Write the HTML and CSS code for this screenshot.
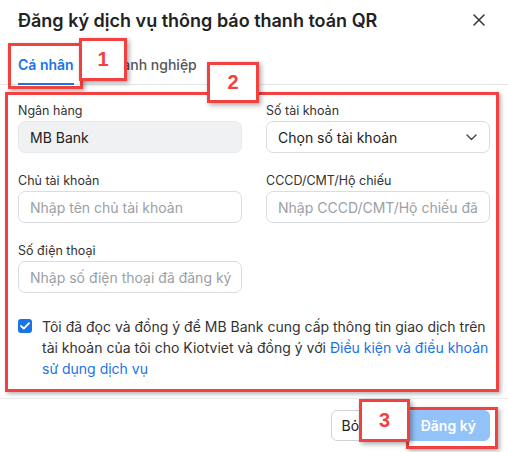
FILE: index.html
```html
<!DOCTYPE html>
<html lang="vi">
<head>
    <meta charset="UTF-8">
    <meta name="viewport" content="width=device-width, initial-scale=1.0">
    <title>Đăng ký dịch vụ thông báo thanh toán QR</title>
    <link rel="stylesheet" href="styles.css">
</head>
<body>
    <div class="dialog">
        <div class="header">
            <h2>Đăng ký dịch vụ thông báo thanh toán QR</h2>
            <span class="close">
                <svg width="12" height="12" viewBox="0 0 12 12"><path d="M1 1L11 11M11 1L1 11" stroke="#333" stroke-width="1.5" stroke-linecap="round"/></svg>
            </span>
        </div>

        <div class="tabs">
            <div class="tab active">Cá nhân</div>
            <div class="tab">Doanh nghiệp</div>
        </div>

        <div class="form">
            <div class="field">
                <label>Ngân hàng</label>
                <div class="input disabled">MB Bank</div>
            </div>
            <div class="field">
                <label>Số tài khoản</label>
                <div class="input select">
                    <span>Chọn số tài khoản</span>
                    <svg width="11" height="7" viewBox="0 0 11 7"><path d="M1 1L5.5 5.5L10 1" fill="none" stroke="#444" stroke-width="1.4" stroke-linecap="round" stroke-linejoin="round"/></svg>
                </div>
            </div>
            <div class="field">
                <label>Chủ tài khoản</label>
                <div class="input placeholder">Nhập tên chủ tài khoản</div>
            </div>
            <div class="field">
                <label>CCCD/CMT/Hộ chiếu</label>
                <div class="input placeholder">Nhập CCCD/CMT/Hộ chiếu đã</div>
            </div>
            <div class="field">
                <label>Số điện thoại</label>
                <div class="input placeholder">Nhập số điện thoại đã đăng ký</div>
            </div>
        </div>

        <div class="agree">
            <span class="check">
                <svg width="10" height="8" viewBox="0 0 10 8"><path d="M1 4L3.8 6.6L9 1.2" fill="none" stroke="#fff" stroke-width="1.8" stroke-linecap="round" stroke-linejoin="round"/></svg>
            </span>
            <p>Tôi đã đọc và đồng ý để MB Bank cung cấp thông tin giao dịch trên tài khoản của tôi cho Kiotviet và đồng ý với <a href="#">Điều kiện và điều khoản sử dụng dịch vụ</a></p>
        </div>

        <div class="footer">
            <button class="btn">Bỏ qua</button>
            <button class="btn primary">Đăng ký</button>
        </div>
    </div>

    <!-- annotation marks -->
    <div class="mark box1"></div>
    <div class="mark box2"></div>
    <div class="mark box3"></div>
    <div class="tag tag1">1</div>
    <div class="tag tag2">2</div>
    <div class="tag tag3">3</div>
</body>
</html>
```

FILE: styles.css
```css
body { margin: 0; font-family: Inter, "Noto Sans", sans-serif; color: #222; background: #fff; }
.dialog { width: 508px; height: 452px; box-sizing: border-box; padding: 8px 18px 0; position: relative; overflow: hidden; }

.header { display: flex; justify-content: space-between; align-items: center; height: 24px; }
.header h2 { margin: 0; font-size: 18px; font-weight: 600; color: #222; }
.close { display: flex; margin-right: 5px; }

.tabs { display: flex; gap: 30px; margin: 22px -18px 0; padding: 0 18px; border-bottom: 1px solid #e4e6ea; }
.tab { font-size: 14px; line-height: 17px; color: #555; padding: 2px 0 11px; font-weight: 500; }
.tab.active { color: #1a73e8; font-weight: 600; border-bottom: 2px solid #1a73e8; padding-bottom: 9px; margin-bottom: -1px; }

.form { display: grid; grid-template-columns: minmax(0, 1fr) minmax(0, 1fr); column-gap: 24px; row-gap: 20px; margin-top: 18px; }
.field label { display: block; font-size: 12.5px; color: #333; margin-bottom: 2px; line-height: 16px; }
.input { height: 32px; box-sizing: border-box; border: 1px solid #d9dce1; border-radius: 7px; padding: 0 11px; display: flex; align-items: center; font-size: 14px; color: #222; white-space: nowrap; overflow: hidden; }
.input.disabled { background: #f0f1f3; border-color: #e6e8eb; }
.input.placeholder { color: #9aa0a6; }
.input.select { justify-content: space-between; padding-right: 12px; }

.agree { display: flex; gap: 10px; margin-top: 23px; align-items: flex-start; }
.check { flex: none; width: 14px; height: 14px; border-radius: 3px; background: #1a73e8; display: flex; align-items: center; justify-content: center; margin-top: 3px; }
.agree p { margin: 0; font-size: 14px; line-height: 21px; color: #333; }
.agree a { color: #1a73e8; text-decoration: none; }

.footer { display: flex; justify-content: flex-end; gap: 8px; margin: 19px -18px 0; padding: 11px 18px 0; border-top: 1px solid #e8eaed; }
.btn { font-family: inherit; font-size: 14px; height: 31px; padding: 0 10px; border-radius: 6px; border: 1px solid #cfd3d8; background: #fff; color: #222; }
.btn.primary { background: #93c2f9; border-color: #93c2f9; color: #fff; font-weight: 600; padding: 0 13px; }

.mark { position: absolute; border: 3px solid #f2413f; box-shadow: 2px 2px 4px rgba(0,0,0,0.3); }
.box1 { left: 8px; top: 43px; width: 69px; height: 40px; }
.box2 { left: 5px; top: 92px; width: 488px; height: 294px; }
.box3 { left: 406px; top: 407px; width: 86px; height: 36px; }
.tag { position: absolute; background: #fff; border: 3px solid #f2413f; box-shadow: 2px 2px 5px rgba(0,0,0,0.35); color: #f2413f; font-family: "Liberation Sans", Arial, sans-serif; font-weight: 700; font-size: 20px; display: flex; align-items: center; justify-content: center; }
.tag1 { left: 79px; top: 38px; width: 42px; height: 37px; }
.tag2 { left: 207px; top: 62px; width: 46px; height: 35px; }
.tag3 { left: 359px; top: 399px; width: 45px; height: 37px; }
```
